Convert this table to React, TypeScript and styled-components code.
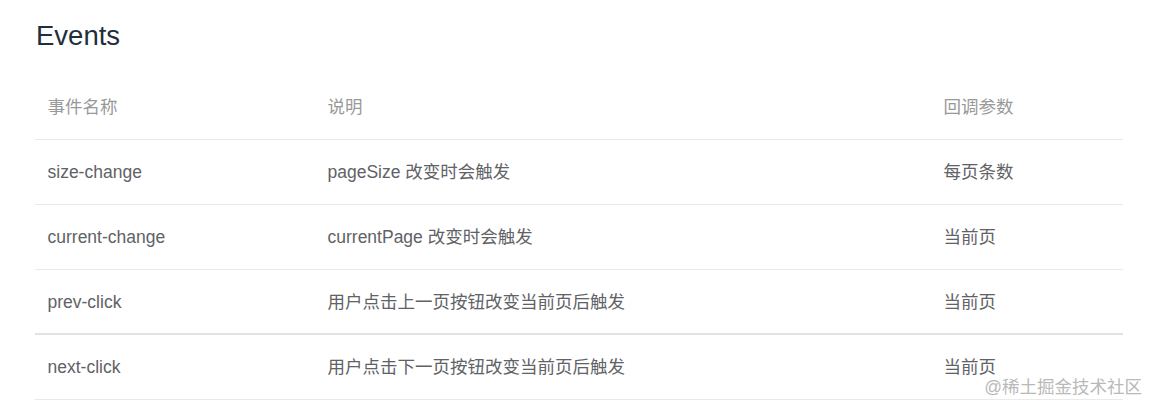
import React from "react";
import styled, { createGlobalStyle } from "styled-components";

const GlobalStyle = createGlobalStyle`
  html, body { margin: 0; padding: 0; background: #fff; }
  body { font-family: "Liberation Sans", Arial, "Noto Sans CJK SC", sans-serif; }
  * { box-sizing: border-box; }
`;

const Page = styled.div`
  position: relative;
  width: 1156px;
  height: 414px;
  padding-left: 35px;
  overflow: hidden;
`;

const Title = styled.h3`
  margin: 0 0 22px 1px;
  padding-top: 19px;
  font-size: 27.5px;
  line-height: 34px;
  font-weight: 400;
  color: #1f2f3d;
`;

const Table = styled.div`
  width: 1088px;
  display: flex;
  flex-direction: column;
`;

const Row = styled.div<{ $thick?: boolean; $head?: boolean }>`
  display: grid;
  grid-template-columns: 280px 616px 192px;
  border-bottom: ${(p) => (p.$thick ? "2px solid #e3e3e3" : "1px solid #eaeaea")};
  height: 65px;
  align-items: center;
  color: ${(p) => (p.$head ? "#999999" : "#606266")};
`;

const Cell = styled.div`
  padding: 0 12.5px;
  font-size: 17.5px;
  line-height: 26px;
  white-space: nowrap;
`;

const Watermark = styled.div`
  position: absolute;
  right: 14px;
  top: 375px;
  font-size: 17.5px;
  line-height: 24px;
  color: #b9b9b9;
  text-shadow: 0 0 2px #fff;
`;

const rows = [
  ["size-change", "pageSize 改变时会触发", "每页条数"],
  ["current-change", "currentPage 改变时会触发", "当前页"],
  ["prev-click", "用户点击上一页按钮改变当前页后触发", "当前页"],
  ["next-click", "用户点击下一页按钮改变当前页后触发", "当前页"],
];

export default function App() {
  return (
    <Page>
      <GlobalStyle />
      <Title>Events</Title>
      <Table>
        <Row $head>
          <Cell>事件名称</Cell>
          <Cell>说明</Cell>
          <Cell>回调参数</Cell>
        </Row>
        {rows.map((r, i) => (
          <Row key={r[0]} $thick={i === 2}>
            <Cell>{r[0]}</Cell>
            <Cell>{r[1]}</Cell>
            <Cell>{r[2]}</Cell>
          </Row>
        ))}
      </Table>
      <Watermark>@稀土掘金技术社区</Watermark>
    </Page>
  );
}
